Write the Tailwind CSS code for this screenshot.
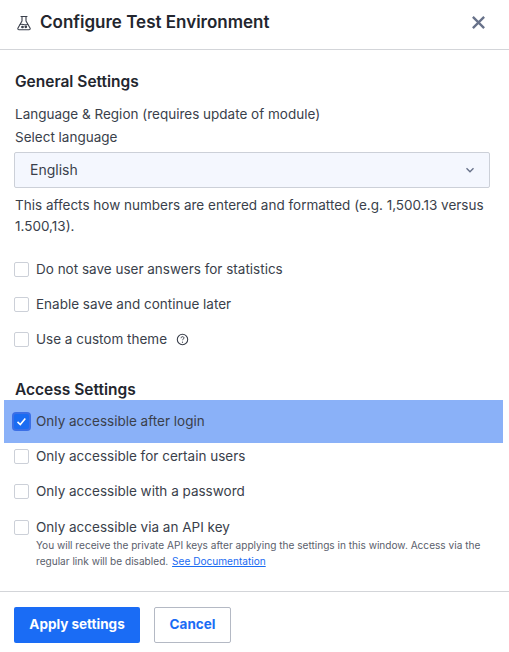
<!DOCTYPE html>
<html>
<head>
<meta charset="utf-8">
<script src="https://cdn.jsdelivr.net/npm/@tailwindcss/browser@4"></script>
</head>
<body class="bg-white font-['Inter',sans-serif] text-[#3a3f4b]">
<div class="w-[509px] h-[652px] flex flex-col overflow-hidden">
  <header class="h-[50px] shrink-0 border-b border-[#d3d5d9] flex items-center pl-[16px] pr-[23px]">
    <svg class="w-[16px] h-[16px] mr-[8px] mb-[3px]" viewBox="0 0 16 16" fill="none" stroke="#3a3f4b" stroke-width="1.1" stroke-linejoin="round" stroke-linecap="round"><path d="M5 1.5h6M6 1.5v4.5L2 13c-.6 1 .1 1.7 1 1.7h10c.9 0 1.6-.7 1-1.7L10 6V1.5"/><path d="M4.2 9.5c2-.8 4 .8 7.4 0"/><circle cx="6.5" cy="12" r=".8" fill="#3a3f4b"/><circle cx="9.8" cy="11.8" r=".8" fill="#3a3f4b"/></svg>
    <h1 class="text-[17px] font-semibold text-[#23262e] mb-[3px] flex-1">Configure Test Environment</h1>
    <svg class="w-[15px] h-[15px] mb-[4px]" viewBox="0 0 16 16" fill="none" stroke="#68728a" stroke-width="2.5"><path d="M2 2l12 12M14 2L2 14"/></svg>
  </header>
  <main class="flex-1 pl-[15px] pr-[19px] pt-[23px] min-h-0">
    <h2 class="text-[15.5px] leading-[18px] font-semibold text-[#23262e]">General Settings</h2>
    <p class="text-[13.5px] leading-[20px] mt-[13px]">Language &amp; Region (requires update of module)</p>
    <p class="text-[13.5px] leading-[20px] mt-[3px]">Select language</p>
    <div class="mt-[5px] -ml-[1px] h-[36px] bg-[#f4f7fe] border border-[#ccd0d8] rounded-[2px] flex items-center justify-between pl-[15px] pr-[14px] text-[14px]">
      <span class="mb-[1px]">English</span>
      <svg class="w-[10px] h-[10px]" viewBox="0 0 10 10" fill="none" stroke="#68728a" stroke-width="1.4"><path d="M1.500 3.200L5 6.700l3.500-3.500"/></svg>
    </div>
    <p class="text-[13.5px] leading-[21px] mt-[7px]">This affects how numbers are entered and formatted (e.g. 1,500.13 versus 1.500,13).</p>
    <div class="mt-[22px] -ml-[1px] flex items-center h-[20px]"><span class="w-[15px] h-[15px] bg-white border border-[#ccd0d8] rounded-[2px] mr-[7px]"></span><span class="text-[13.5px]">Do not save user answers for statistics</span></div>
    <div class="mt-[15px] -ml-[1px] flex items-center h-[20px]"><span class="w-[15px] h-[15px] bg-white border border-[#ccd0d8] rounded-[2px] mr-[7px]"></span><span class="text-[13.5px]">Enable save and continue later</span></div>
    <div class="mt-[15px] -ml-[1px] flex items-center h-[20px]"><span class="w-[15px] h-[15px] bg-white border border-[#ccd0d8] rounded-[2px] mr-[7px]"></span><span class="text-[13.5px]">Use a custom theme</span>
      <svg class="w-[13px] h-[13px] ml-[9px]" viewBox="0 0 13 13" fill="none" stroke="#3a3f4b"><circle cx="6.5" cy="6.5" r="5.2" stroke-width="1.1"/><path d="M5 5.200c0-2 3-2 3-.2 0 1-1.500 1.100-1.500 2.200" stroke-width="1"/><circle cx="6.5" cy="9.200" r=".6" fill="#3a3f4b" stroke="none"/></svg>
    </div>
    <h2 class="text-[15.5px] leading-[18px] font-semibold text-[#23262e] mt-[32px]">Access Settings</h2>
    <div class="mt-[1px] -ml-[11px] w-[499px] h-[43px] bg-[#8ab1f8] flex items-center pl-[10px]">
      <span class="w-[15px] h-[15px] bg-[#1a6cf2] rounded-[2px] ring-2 ring-[#3b6fe6] mr-[7px] flex items-center justify-center"><svg class="w-[11px] h-[11px]" viewBox="0 0 11 11" fill="none" stroke="#fff" stroke-width="1.6"><path d="M1.500 5.800l2.800 2.700 5-6"/></svg></span>
      <span class="text-[13.5px] mb-[1px]">Only accessible after login</span>
    </div>
    <div class="mt-[3px] -ml-[1px] flex items-center h-[20px]"><span class="w-[15px] h-[15px] bg-white border border-[#ccd0d8] rounded-[2px] mr-[7px]"></span><span class="text-[13.5px]">Only accessible for certain users</span></div>
    <div class="mt-[15px] -ml-[1px] flex items-center h-[20px]"><span class="w-[15px] h-[15px] bg-white border border-[#ccd0d8] rounded-[2px] mr-[7px]"></span><span class="text-[13.5px]">Only accessible with a password</span></div>
    <div class="mt-[16px] -ml-[1px] flex items-center h-[20px]"><span class="w-[15px] h-[15px] bg-white border border-[#ccd0d8] rounded-[2px] mr-[7px]"></span><span class="text-[13.5px]">Only accessible via an API key</span></div>
    <p class="ml-[21px] w-[450px] text-[10.1px] leading-[16px] text-[#5a606c]">You will receive the private API keys after applying the settings in this window. Access via the regular link will be disabled. <a class="ml-[1px] text-[#1a6cf2] underline">See Documentation</a></p>
  </main>
  <footer class="h-[61px] shrink-0 border-t border-[#d3d5d9] px-[14px] pt-[15px] flex items-start gap-[14px]">
    <button class="w-[126px] h-[36px] pb-[2px] bg-[#1a6cf5] text-white text-[13.5px] font-bold rounded-[2px]">Apply settings</button>
    <button class="w-[77px] h-[36px] pb-[2px] bg-white border border-[#b4b9c4] text-[#1a6cf5] text-[13.5px] font-bold rounded-[2px]">Cancel</button>
  </footer>
</div>
</body>
</html>
